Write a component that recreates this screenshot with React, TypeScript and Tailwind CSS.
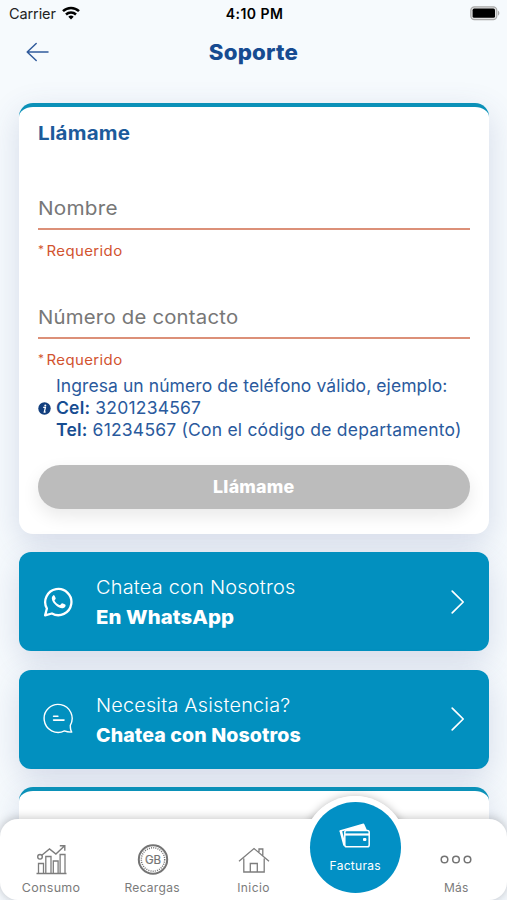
import type { ReactNode } from 'react';

const CARD_SHADOW = 'shadow-[0_10px_32px_rgba(62,80,140,0.18)]';

function StatusBar() {
  return (
    <div className="grid h-7 grid-cols-3 items-center pl-[9px] pr-[7px] text-black">
      <div className="flex items-center gap-1.5">
        <span className="text-[14.5px] leading-7 tracking-[-0.1px] text-[#222]">Carrier</span>
        <svg className="-mt-0.5" width="18" height="14" viewBox="0 0 18 14" fill="none" stroke="#000" strokeWidth="2.5">
          <path d="M1 5.2a11.6 11.6 0 0 1 16 0" />
          <path d="M4 8.5a7.3 7.3 0 0 1 10 0" />
          <path d="M6.3 10.7 9 13.4l2.7-2.7a3.9 3.9 0 0 0-5.4 0Z" fill="#000" stroke="none" />
        </svg>
      </div>
      <span className="text-center text-[14px] font-semibold leading-7 tracking-[0.45px]">4:10 PM</span>
      <svg className="-mt-0.5 justify-self-end" width="31" height="15" viewBox="0 0 31 15">
        <rect x="1.8" y="0.8" width="26" height="12.8" rx="3.6" fill="#e2e2e2" stroke="#a9a9a9" strokeWidth="1.2" />
        <rect x="3.6" y="2.6" width="22.4" height="9.2" rx="1.6" fill="#000" />
        <path d="M29 4.8c1.8.5 1.8 4.2 0 4.8Z" fill="#a9a9a9" />
      </svg>
    </div>
  );
}

function Field({ label, labelClass }: { label: string; labelClass: string }) {
  return (
    <div className="h-[109px]">
      <div className="h-[42px] border-b-2 border-[#dc9078]">
        <span className={`block w-max origin-left text-[19px] leading-[41px] tracking-[0.2px] text-[#777] ${labelClass}`}>{label}</span>
      </div>
      <p className="mt-[11.5px] flex origin-left scale-x-[1.07] gap-[3px] text-[14px] leading-5 tracking-[0.35px] text-[#d2532f]">
        <span className="w-[5px] text-[11px] leading-[17px]">*</span>
        <span>Requerido</span>
      </p>
    </div>
  );
}

function ActionCard({ icon, title, bold, titleClass, boldClass }: {
  icon: ReactNode; title: string; bold: string; titleClass: string; boldClass: string;
}) {
  return (
    <button className={`flex h-[99px] w-full shrink-0 items-center rounded-xl bg-[#0290bf] pl-6 text-left text-white ${CARD_SHADOW}`}>
      {icon}
      <div className="ml-[22px] flex-1 pt-[2px]">
        <div className={`w-max origin-left text-[18.5px] font-light leading-[30px] tracking-[0.2px] ${titleClass}`}>{title}</div>
        <div className={`w-max origin-left text-[19px] font-extrabold leading-[31px] ${boldClass}`}>{bold}</div>
      </div>
      <svg className="mr-[23px]" width="18" height="26" viewBox="0 0 18 26" fill="none" stroke="#fff" strokeWidth="1.7" strokeLinecap="round" strokeLinejoin="round">
        <path d="m4.2 2.2 11 10.8-11 10.8" />
      </svg>
    </button>
  );
}

function WhatsAppIcon() {
  return (
    <svg width="31" height="32" viewBox="0 0 31 32" fill="none">
      <path d="M2.1 29.3 3.9 22.5A13.1 13.1 0 1 1 8.9 27.5Z" stroke="#fff" strokeWidth="2.3" strokeLinejoin="round" />
      <path d="M10.8 9c-.8.2-2.1 1.7-2 3.6.2 3 2.7 5.6 4.6 7.2 2.2 1.7 5 2.9 7.1 2.1 1.3-.5 2.2-1.5 2.1-3 0-.5-3.2-1.9-3.7-1.7-.7.3-1.3 1.9-1.9 1.8-1.8-.2-4.8-2.8-5.5-4.6.1-.5 1.4-1.4 1.2-2-.2-.7-1.1-3.4-1.9-3.4Z" fill="#fff" />
    </svg>
  );
}

function ChatIcon() {
  return (
    <svg width="31" height="32" viewBox="0 0 31 32" fill="none" stroke="#fff" strokeWidth="1.4" strokeLinecap="round" strokeLinejoin="round">
      <path d="M27.3 22.3A14 14 0 1 0 21.4 27.9c2.3 1 4.7 1.3 7.4 1.2-1.1-1.3-1.5-3.9-1.5-6.8Z" />
      <path d="M10.600 13.300h4.300M10.600 17.100h10.400" strokeWidth="1.600" />
    </svg>
  );
}

function NavItem({ icon, label, labelClass }: { icon: ReactNode; label: string; labelClass: string }) {
  return (
    <div className="flex flex-1 flex-col items-center pt-[25px]">
      <div className="flex h-8 items-center">{icon}</div>
      <span className={`mt-[3px] text-[12px] leading-[18px] text-[#7b7b7b] ${labelClass}`}>{label}</span>
    </div>
  );
}

function BottomNav() {
  return (
    <nav className="absolute bottom-0 left-0 h-[81px] w-full">
      <div className="absolute left-[303px] -top-[23px] size-[104px] rounded-full bg-white shadow-[0_0_8px_rgba(0,0,0,0.26)]" />
      <div className="absolute inset-0 rounded-[18px] bg-white shadow-[0_-1px_10px_rgba(0,0,0,0.22)]" />
      <div className="absolute left-[303px] -top-[23px] size-[104px] rounded-full bg-white" />
      <div className="absolute inset-0 flex">
        <NavItem
          label="Consumo"
          labelClass="scale-x-[1.04] tracking-[0.3px]"
          icon={
            <svg className="ml-0.5" width="31" height="32" viewBox="0 0 31 32" fill="none" stroke="#7d7d7d" strokeWidth="1.3">
              <path d="M.5 29.5h30M2.5 29V19.5h5V29M9.8 29V12.5h5.2V29M17.3 29V17h4.8V29M24.1 29V10.5h4.9V29" />
              <path d="m5.8 11.2 7.7-6.3 6.4 5.2 8.5-8M23.8 1.8h5v5" strokeWidth="1.4" />
              <circle cx="4" cy="12.8" r="2.3" strokeWidth="1.4" />
            </svg>
          }
        />
        <NavItem
          label="Recargas"
          labelClass="tracking-[0.3px]"
          icon={
            <svg className="ml-px" width="32" height="32" viewBox="0 0 32 32" fill="none" stroke="#747474">
              <circle cx="16" cy="15.5" r="14.2" strokeWidth="2" />
              <circle cx="16" cy="15.5" r="11.7" strokeWidth="1.5" strokeDasharray="1 1.2" />
              <text x="16" y="19.6" textAnchor="middle" fontFamily="Inter, sans-serif" fontSize="11.5" fill="#747474" strokeWidth="0.2">GB</text>
            </svg>
          }
        />
        <NavItem
          label="Inicio"
          labelClass="tracking-[0.4px]"
          icon={
            <svg className="ml-px" width="32" height="32" viewBox="0 0 32 32" fill="none" stroke="#7d7d7d" strokeWidth="1.3">
              <path d="M1 17.3 16 4.5l15 12.8M5.8 14.5V28h20.400V14.500M12.300 28v-8.500h7V28M21 8V5h3.800v6.500" />
            </svg>
          }
        />
        <div className="flex-1" />
        <NavItem
          label="Más"
          labelClass="tracking-[0.3px]"
          icon={
            <svg width="32" height="10" viewBox="0 0 32 10" fill="none" stroke="#747474" strokeWidth="1.5">
              <circle cx="4.5" cy="4.5" r="3.3" />
              <circle cx="16" cy="4.5" r="3.3" />
              <circle cx="27.5" cy="4.5" r="3.3" />
            </svg>
          }
        />
      </div>
      <div className="absolute left-[310px] -top-[17px] flex size-[90.5px] flex-col items-center rounded-full bg-[#0290c5] pt-[21px] text-white">
        <svg width="32" height="26" viewBox="0 0 32 26" fill="none" stroke="#fff" strokeWidth="1.5" strokeLinejoin="round">
          <path d="M1.2 8 24.5 1.3 27 6.8H6Z" fill="#fff" />
          <path d="M1.8 8 5.6 22.5" strokeWidth="2.6" />
          <rect x="5.8" y="7.5" width="24.4" height="16.2" rx="1.8" fill="#0290c5" />
          <path d="M6 11.5h24" strokeWidth="2.2" />
          <rect x="24" y="15" width="3.4" height="3" rx="1" fill="#fff" stroke="none" />
        </svg>
        <span className="mt-[8px] text-[12px] leading-[18px] tracking-[0.3px]">Facturas</span>
      </div>
    </nav>
  );
}

export default function App() {
  return (
    <div className="relative h-[900px] w-[507px] overflow-hidden bg-[#f6fafd] font-['Inter',sans-serif]">
      <StatusBar />
      <header className="grid h-[75.4px] grid-cols-[60px_1fr_60px] items-start">
        <svg className="ml-[26px] mt-[13px]" width="24" height="22" viewBox="0 0 24 22" fill="none" stroke="#315b9c" strokeWidth="1.5" strokeLinecap="round" strokeLinejoin="round">
          <path d="M22 11H1.5M10.2 2.5 1.2 11l9 8.5" />
        </svg>
        <h1 className="scale-x-[1.035] pt-[9px] text-center text-[21.5px] font-extrabold leading-[30px] tracking-[0.2px] text-[#164b91]">Soporte</h1>
      </header>
      <main className="flex flex-col gap-[18.5px] pl-[19px] pr-[18px]">
        <section className={`h-[430.5px] shrink-0 rounded-[14px] border-t-4 border-[#0b91b8] bg-white pl-[18.5px] pr-[19px] ${CARD_SHADOW}`}>
          <h2 className="w-max origin-left scale-x-[1.08] pt-[11.5px] text-[19px] font-bold leading-[30px] tracking-[0.2px] text-[#1c5b9b]">Llámame</h2>
          <div className="mt-[39px]">
            <Field label="Nombre" labelClass="scale-x-[1.09]" />
            <Field label="Número de contacto" labelClass="scale-x-[1.07]" />
          </div>
          <div className="-mt-[30.5px] flex items-center gap-[5.5px] text-[#2a5a9d]">
            <svg className="shrink-0" width="13" height="13" viewBox="0 0 13 13">
              <circle cx="6.5" cy="6.5" r="6.2" fill="#123f7e" />
              <circle cx="7.3" cy="3.4" r="1" fill="#fff" />
              <path d="M5.2 5.3h2.200L6.300 10h1.300" fill="none" stroke="#fff" strokeWidth="1.300" />
            </svg>
            <p className="whitespace-nowrap text-[17.5px] leading-[22px] tracking-[0.2px]">
              <span className="tracking-[0.08px]">Ingresa un número de teléfono válido, ejemplo:</span><br />
              <b className="font-semibold text-[#174d91]">Cel:</b> 3201234567<br />
              <b className="font-semibold text-[#174d91]">Tel:</b> 61234567 (Con el código de departamento)
            </p>
          </div>
          <button className="mt-[24px] flex h-11 w-full items-center justify-center rounded-full bg-[#bcbcbc] text-white shadow-[0_7px_18px_rgba(0,0,0,0.09)]">
            <span className="scale-x-[1.05] pt-px text-[17px] font-extrabold tracking-[0.2px]">Llámame</span>
          </button>
        </section>
        <ActionCard icon={<WhatsAppIcon />} title="Chatea con Nosotros" bold="En WhatsApp" titleClass="scale-x-[1.077]" boldClass="scale-x-[1.07] tracking-[0.1px]" />
        <ActionCard icon={<ChatIcon />} title="Necesita Asistencia?" bold="Chatea con Nosotros" titleClass="scale-x-[1.07]" boldClass="scale-x-[1.03] tracking-[0.1px]" />
        <section className={`h-[120px] shrink-0 rounded-[14px] border-t-4 border-[#0b91b8] bg-white ${CARD_SHADOW}`} />
      </main>
      <BottomNav />
    </div>
  );
}
